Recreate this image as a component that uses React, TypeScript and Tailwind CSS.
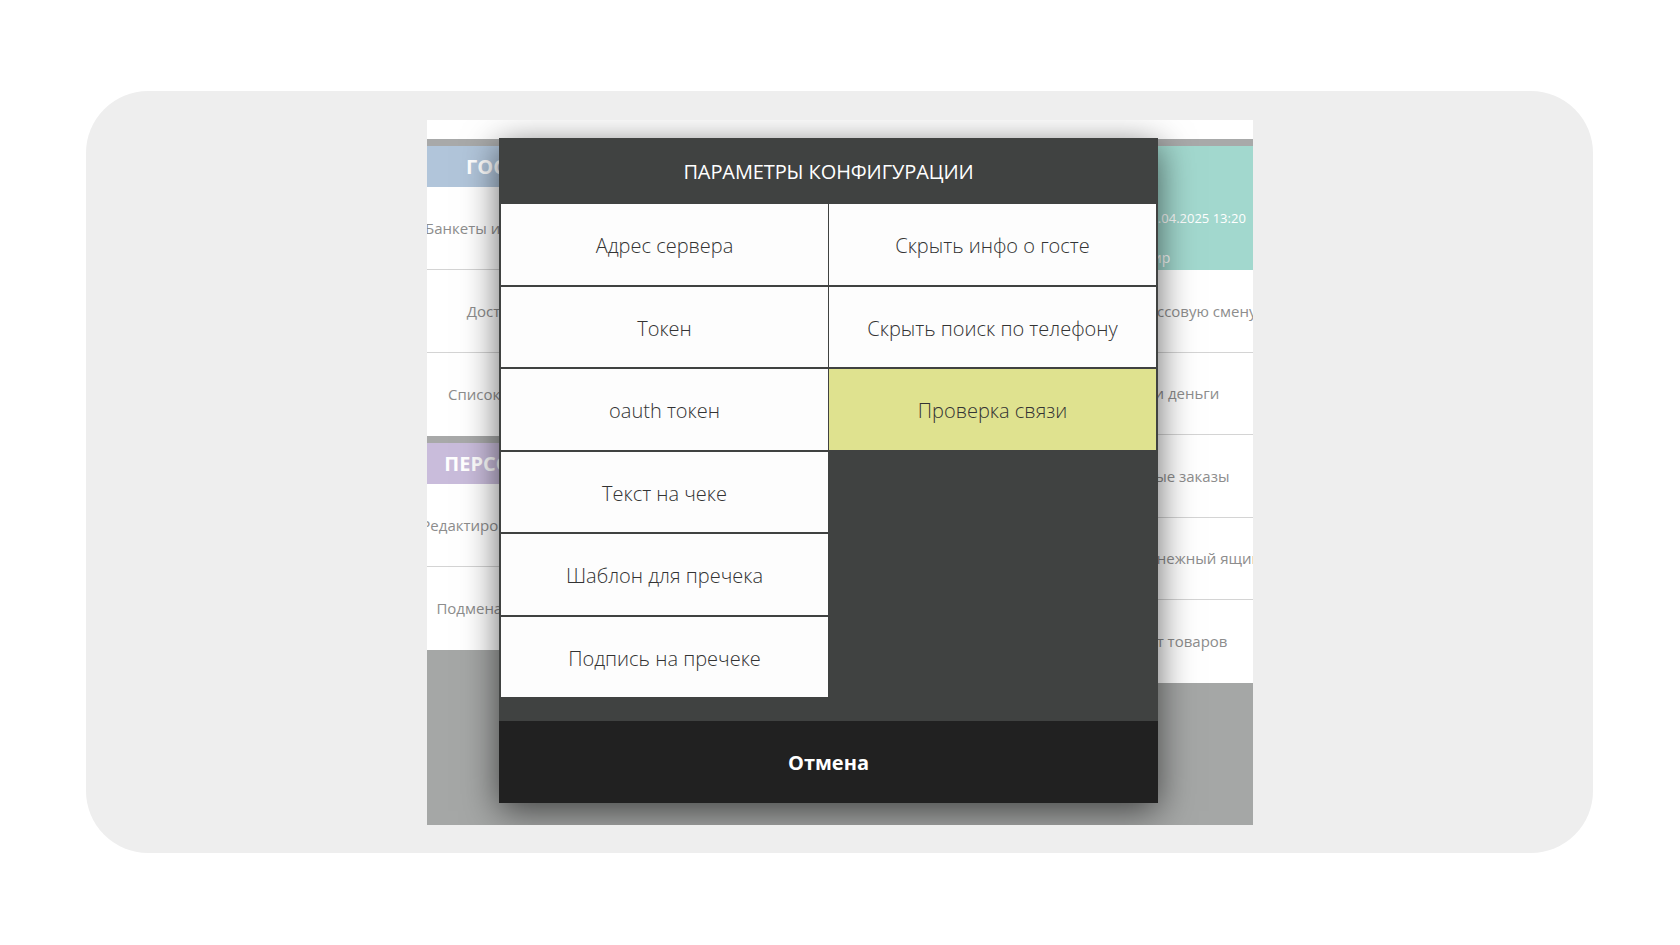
import React from "react";

const leftTop = ["Банкеты и депозиты", "Доставка", "Список гостей"];
const leftBottom = ["Редактировать смену", "Подмена кассира"];
const rightRows = [
  "Закрыть кассовую смену",
  "Внести деньги",
  "Закрытые заказы",
  "Открыть денежный ящик",
  "Возврат товаров",
];

const cellsLeft = [
  "Адрес сервера",
  "Токен",
  "oauth токен",
  "Текст на чеке",
  "Шаблон для пречека",
  "Подпись на пречеке",
];
const cellsRight = ["Скрыть инфо о госте", "Скрыть поиск по телефону", "Проверка связи"];

function BgRow({ text, last, h }: { text: string; last?: boolean; h?: string }) {
  return (
    <div
      className={
        (h === "s" ? "h-[82.5px] " : "h-[83px] ") +
        "bg-white flex items-center justify-center whitespace-nowrap text-[15px] text-[#8d8d8d] " +
        (last ? "" : "border-b border-[#d4d4d4]")
      }
    >
      {text}
    </div>
  );
}

export default function App() {
  const cells: { text: string; hl?: boolean }[] = [];
  for (let i = 0; i < 6; i++) {
    cells.push({ text: cellsLeft[i] });
    if (i < 3) cells.push({ text: cellsRight[i], hl: i === 2 });
    else cells.push({ text: "__empty__" });
  }
  return (
    <div className="w-[1680px] h-[945px] bg-white pt-[91px] pl-[86px] font-['Open_Sans',sans-serif] overflow-hidden">
      <div className="w-[1507px] h-[762px] rounded-[62px] bg-[#eeeeee] pl-[341px] pt-[29px]">
        <div className="relative w-[826px] h-[705px] overflow-hidden bg-[#a5a7a6]">
          <div className="h-[19px] bg-white" />
          <div className="h-[7px] bg-[#a8a9a9]" />
          <div className="flex justify-between items-start">
            {/* left column */}
            <div className="w-[146px] flex flex-col">
              <div className="h-[41px] bg-[#b1c5da] flex items-center justify-center text-white font-bold text-[20px] whitespace-nowrap">
                ГОСТИ
              </div>
              {leftTop.map((t, i) => (
                <BgRow key={t} text={t} last={i === leftTop.length - 1} />
              ))}
              <div className="h-[7px] bg-[#a8a9a9]" />
              <div className="h-[41px] bg-[#c9bcdb] flex items-center justify-center text-white font-bold text-[20px] whitespace-nowrap">
                ПЕРСОНАЛ
              </div>
              {leftBottom.map((t, i) => (
                <BgRow key={t} text={t} last={i === leftBottom.length - 1} />
              ))}
            </div>
            {/* right column */}
            <div className="w-[174px] flex flex-col">
              <div className="h-[124px] bg-[#a2d8ce] flex flex-col text-white text-[13px] whitespace-nowrap pt-[63px]">
                <div className="pl-[64px] leading-[18px]">05.04.2025 13:20</div>
                <div className="pl-[44px] mt-[22px] text-[14px] leading-[18px]">Кассир</div>
              </div>
              {rightRows.map((t, i) => (
                <BgRow key={t} text={t} h="s" last={i === rightRows.length - 1} />
              ))}
            </div>
          </div>

          {/* modal */}
          <div className="absolute left-[72px] top-[18px] w-[659px] h-[665px] bg-[#404241] shadow-[0_8px_34px_rgba(0,0,0,0.6)] flex flex-col">
            <div className="h-[65px] pt-[2px] flex items-center justify-center text-white text-[20px] tracking-[-0.1px]">
              ПАРАМЕТРЫ КОНФИГУРАЦИИ
            </div>
            <div className="pt-[1px] px-[2px] grid grid-cols-2 gap-x-[1px] gap-y-[2px]">
              {cells.map((c, i) =>
                c.text === "__empty__" ? (
                  <div key={i} className="h-[80.5px]" />
                ) : (
                  <div
                    key={i}
                    className={
                      "h-[80.5px] pt-[4px] flex items-center justify-center text-[20px] font-light text-[#333333] whitespace-nowrap " +
                      (c.hl ? "bg-[#dfe28f]" : "bg-[#fdfdfd]")
                    }
                  >
                    {c.text}
                  </div>
                )
              )}
            </div>
            <div className="flex-1" />
            <div className="h-[82px] pt-[2px] bg-[#212121] flex items-center justify-center text-white font-bold text-[20px]">
              Отмена
            </div>
          </div>
        </div>
      </div>
    </div>
  );
}
